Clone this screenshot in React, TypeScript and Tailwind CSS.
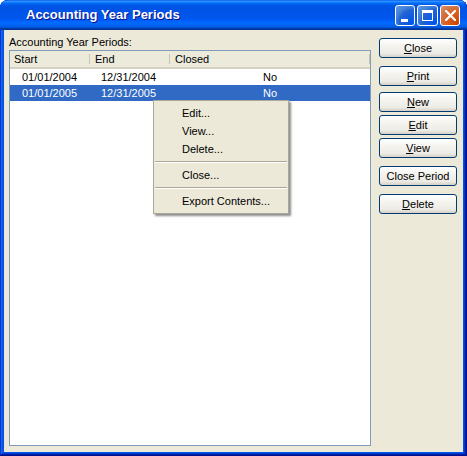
import React from "react";

function XpButton({ label, u, className = "" }: { label: string; u?: number; className?: string }) {
  let content: React.ReactNode = label;
  if (u !== undefined) {
    content = (
      <>
        {label.slice(0, u)}
        <span className="underline underline-offset-[1px]">{label[u]}</span>
        {label.slice(u + 1)}
      </>
    );
  }
  return (
    <div
      className={
        "w-[78px] h-[20px] flex items-center justify-center rounded-[3px] border border-[#003c74] bg-[linear-gradient(to_bottom,#ffffff_0%,#f4f3ee_40%,#ecebe6_80%,#d6d0c5_100%)] text-black text-[11px] leading-none " +
        className
      }
    >
      {content}
    </div>
  );
}

function MenuItem({ label }: { label: string }) {
  return <div className="h-[18px] flex items-center pl-[28px] text-[11px] text-black">{label}</div>;
}

function MenuSep() {
  return (
    <div className="h-[8px] flex flex-col justify-center px-[1px]">
      <div className="h-px bg-[#aca899]" />
      <div className="h-px bg-white" />
    </div>
  );
}

export default function App() {
  const rows = [
    { start: "01/01/2004", end: "12/31/2004", closed: "No", sel: false },
    { start: "01/01/2005", end: "12/31/2005", closed: "No", sel: true },
  ];
  return (
    <div className="relative w-[467px] h-[456px] flex flex-col rounded-t-[8px] overflow-hidden bg-[#0054e3] shadow-[inset_-1px_-1px_#00138c,inset_1px_1px_#0831d9,inset_-2px_-2px_#001ea0,inset_2px_2px_#166aee,inset_-3px_-3px_#003bda,inset_3px_3px_#0855dd] font-['Liberation_Sans',Arial,sans-serif] text-[11px]">
      {/* Title bar */}
      <div className="h-[30px] shrink-0 flex items-center pl-[26px] pr-[7px] rounded-t-[8px] bg-[linear-gradient(to_bottom,#0058ee_0%,#3593ff_4%,#288eff_6%,#127dff_8%,#036ffc_10%,#0262ee_14%,#0057e5_20%,#0054e3_24%,#0055eb_56%,#005bf5_66%,#026afe_76%,#0062ef_86%,#0052d6_92%,#0040ab_94%,#003092_100%)]">
        <span className="flex-1 text-white font-bold text-[13px] [text-shadow:1px_1px_#0f1089]">
          Accounting Year Periods
        </span>
        <div className="flex gap-[2px] mt-[1px]">
          <div className="w-[20px] h-[21px] rounded-[3px] border border-white bg-[radial-gradient(circle_at_90%_90%,#0054e9_0%,#2263d5_55%,#4282d6_70%,#5f97ec_100%)] relative">
            <div className="absolute left-[5px] top-[13px] w-[7px] h-[3px] bg-white" />
          </div>
          <div className="w-[21px] h-[21px] rounded-[3px] border border-white bg-[radial-gradient(circle_at_90%_90%,#0054e9_0%,#2263d5_55%,#4282d6_70%,#5f97ec_100%)] relative">
            <div className="absolute left-[4px] top-[4px] w-[11px] h-[11px] border border-white border-t-[3px]" />
          </div>
          <div className="w-[20px] h-[21px] rounded-[3px] border border-white bg-[radial-gradient(circle_at_90%_90%,#cc4600_0%,#dc6527_55%,#cd7546_70%,#e2916c_100%)] relative flex items-center justify-center">
            <svg width="11" height="11" viewBox="0 0 11 11">
              <path d="M1 1 L10 10 M10 1 L1 10" stroke="white" strokeWidth="2.2" strokeLinecap="square" />
            </svg>
          </div>
        </div>
      </div>

      {/* Client */}
      <div className="flex-1 flex mx-[4px] mb-[4px] bg-[#ece9d8]">
        <div className="flex flex-col pl-[5px] pt-[4px] pb-[6px]">
          <div className="h-[16px] leading-[16px] text-black">Accounting Year Periods:</div>
          <div className="flex-1 w-[362px] border border-[#7f9db9] bg-white flex flex-col">
            <div className="h-[18px] flex bg-[#ebeadb] border-b-2 border-[#d6d2c2] text-black">
              <div className="w-[79px] flex items-center pl-[4px]">Start</div>
              <div className="w-px my-[3px] bg-[#c7c5b2]" />
              <div className="w-[79px] flex items-center pl-[5px]">End</div>
              <div className="w-px my-[3px] bg-[#c7c5b2]" />
              <div className="w-[199px] flex items-center pl-[5px]">Closed</div>
              <div className="w-px my-[3px] bg-[#c7c5b2]" />
            </div>
            {rows.map((r) => (
              <div
                key={r.start}
                className={
                  "h-[16px] flex items-center " + (r.sel ? "bg-[#316ac5] text-white" : "text-black")
                }
              >
                <div className="w-[80px] pl-[12px]">{r.start}</div>
                <div className="w-[80px] pl-[11px]">{r.end}</div>
                <div className="w-[200px] text-center">{r.closed}</div>
              </div>
            ))}
          </div>
        </div>
        <div className="flex flex-col pl-[8px] pt-[8px]">
          <XpButton label="Close" u={0} />
          <XpButton label="Print" u={0} className="mt-[8px]" />
          <XpButton label="New" u={0} className="mt-[6px]" />
          <XpButton label="Edit" u={0} className="mt-[3px]" />
          <XpButton label="View" u={0} className="mt-[3px]" />
          <XpButton label="Close Period" className="mt-[8px]" />
          <XpButton label="Delete" u={0} className="mt-[8px]" />
        </div>
      </div>

      {/* Context menu */}
      <div className="absolute left-[153px] top-[100px] w-[136px] border border-[#aca899] bg-[#ece9d8] py-[3px] shadow-[2px_2px_2px_rgba(0,0,0,0.45)]">
        <MenuItem label="Edit..." />
        <MenuItem label="View..." />
        <MenuItem label="Delete..." />
        <MenuSep />
        <MenuItem label="Close..." />
        <MenuSep />
        <MenuItem label="Export Contents..." />
      </div>
    </div>
  );
}
